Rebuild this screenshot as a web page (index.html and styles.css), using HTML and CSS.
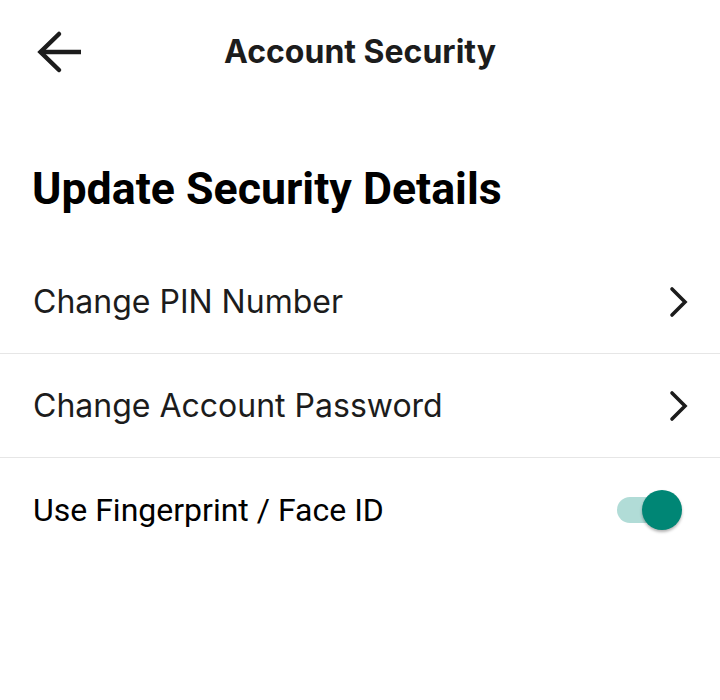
FILE: index.html
```html
<!DOCTYPE html>
<html>
<head>
  <title>Account Security</title>
  <meta charset="UTF-8">
  <meta name="viewport" content="width=device-width, initial-scale=1.0">
  <link rel="stylesheet" href="styles.css">
</head>
<body>
  <div class="header">
    <button class="back" type="button">
      <svg width="48" height="46" viewBox="0 0 48 46">
        <path d="M45 22H5" stroke="#1c1c1c" stroke-width="4.5" fill="none"/>
        <path d="M23 4L4.5 22L23 40" stroke="#1c1c1c" stroke-width="4.5" fill="none" stroke-linecap="round"/>
      </svg>
    </button>
    <h1>Account Security</h1>
  </div>

  <h2 class="section-title">Update Security Details</h2>

  <ul class="menu">
    <li class="menu-item">
      <span>Change PIN Number</span>
      <svg class="chevron" width="22" height="32" viewBox="0 0 22 32">
        <path d="M4 3l13 13L4 29" stroke="#1c1c1c" stroke-width="3.6" fill="none" stroke-linecap="round"/>
      </svg>
    </li>
    <li class="menu-item">
      <span>Change Account Password</span>
      <svg class="chevron" width="22" height="32" viewBox="0 0 22 32">
        <path d="M4 3l13 13L4 29" stroke="#1c1c1c" stroke-width="3.6" fill="none" stroke-linecap="round"/>
      </svg>
    </li>
    <li class="menu-item switch-item">
      <span>Use Fingerprint / Face ID</span>
      <div class="switch on">
        <div class="track"></div>
        <div class="thumb"></div>
      </div>
    </li>
  </ul>
</body>
</html>
```

FILE: styles.css
```css
* {
  margin: 0;
  padding: 0;
  box-sizing: border-box;
}

body {
  font-family: 'Inter', 'Roboto', sans-serif;
  background-color: #fff;
  color: #1c1c1c;
}

/* Header */
.header {
  position: relative;
  height: 104px;
  display: flex;
  align-items: center;
  justify-content: center;
}

.header h1 {
  font-size: 32px;
  font-weight: 700;
  color: #1c1c1c;
  margin-top: -2px;
}

.back {
  position: absolute;
  left: 36px;
  top: 30px;
  background: none;
  border: none;
  cursor: pointer;
  display: flex;
}

/* Section */
.section-title {
  font-family: 'Roboto', sans-serif;
  font-size: 44.7px;
  font-weight: 700;
  color: #000;
  padding: 0 32px;
  margin-top: 57px;
  line-height: 56px;
}

.menu {
  list-style: none;
  margin-top: 33px;
}

.menu-item {
  display: flex;
  align-items: center;
  justify-content: space-between;
  height: 104px;
  padding: 0 30px 0 33px;
  border-bottom: 1px solid #e6e6e6;
  font-size: 32px;
  color: #1c1c1c;
}

.switch-item {
  border-bottom: none;
  font-family: 'Roboto', sans-serif;
  font-size: 32px;
  color: #000;
  padding-right: 38px;
}

/* Switch */
.switch {
  position: relative;
  width: 66px;
  height: 40px;
}

.switch .track {
  position: absolute;
  left: 1px;
  top: 7px;
  width: 50px;
  height: 26px;
  border-radius: 13px;
  background-color: #b1dcd7;
}

.switch .thumb {
  position: absolute;
  right: 0;
  top: 0;
  width: 40px;
  height: 40px;
  border-radius: 50%;
  background-color: #008675;
  box-shadow: 0 2px 3px rgba(0, 0, 0, 0.3);
}
```
